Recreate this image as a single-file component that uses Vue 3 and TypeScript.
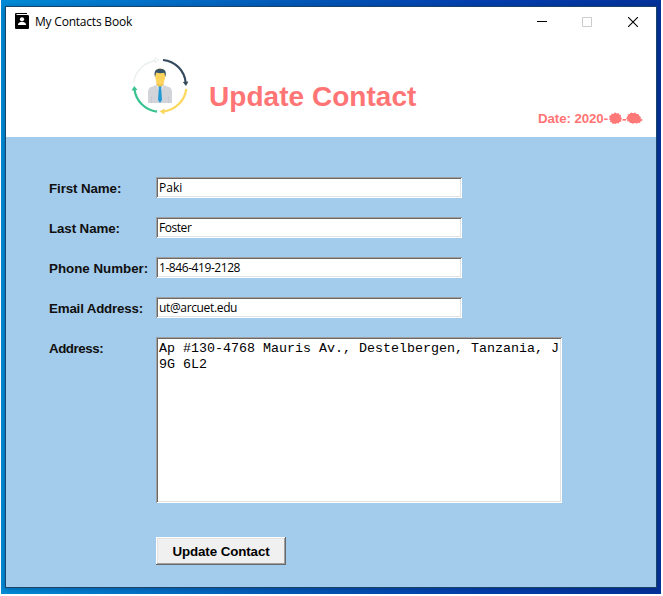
<script setup lang="ts">
import { ref } from 'vue'

interface Field {
  id: string
  label: string
  value: string
}

const fields = ref<Field[]>([
  { id: 'first', label: 'First Name:', value: 'Paki' },
  { id: 'last', label: 'Last Name:', value: 'Foster' },
  { id: 'phone', label: 'Phone Number:', value: '1-846-419-2128' },
  { id: 'email', label: 'Email Address:', value: 'ut@arcuet.edu' },
])
const address = ref('Ap #130-4768 Mauris Av., Destelbergen, Tanzania, J9G 6L2')
</script>

<template>
  <div class="desktop">
    <div class="window">
      <header class="titlebar">
        <svg class="app-icon" width="14" height="16" viewBox="0 0 14 16">
          <path d="M1 0H12v1H2v1h10.500Q14 2 14 3V15Q14 16 13 16H1Q0 16 0 15V1Q0 0 1 0Z" fill="#000" />
          <path d="M1.500 1.500H12" stroke="#fff" stroke-width="1" />
          <circle cx="7" cy="6.300" r="2.100" fill="#fff" />
          <path d="M3 12v-.8C3 9.600 5.500 9 7 9s4 .6 4 2.200v.8Z" fill="#fff" />
        </svg>
        <span class="app-name">My Contacts Book</span>
        <div class="controls">
          <svg width="10" height="10" viewBox="0 0 10 10"><path d="M0 4.500H10" stroke="#000" /></svg>
          <svg class="maximize" width="10" height="10" viewBox="0 0 10 10"><path d="M.5.5h9v9h-9Z" fill="none" stroke="#ccc" /></svg>
          <svg width="10" height="10" viewBox="0 0 10 10"><path d="M0 0 10 10M10 0 0 10" stroke="#000" stroke-width="1.100" /></svg>
        </div>
      </header>

      <section class="banner">
        <svg class="logo" width="80" height="70" viewBox="0 0 80 70">
          <g fill="none" stroke-width="2.200">
            <path d="M43 10A25 25 0 0 1 65.700 33" stroke="#34495e" />
            <path d="M66.300 39A26 26 0 0 1 43 61.500" stroke="#fbd75e" />
            <path d="M37 61.700A26 26 0 0 1 14.400 39" stroke="#3bc492" />
            <path d="M13.700 32A26 26 0 0 1 36 10.500" stroke="#e9eeee" stroke-width="1.300" />
          </g>
          <path d="m62.800 32 3.200 4 2.400-4.500Z" fill="#34495e" />
          <path d="m44.500 58.500-5 3 5 3Z" fill="#fbd75e" />
          <path d="m11.500 40.500 2.700-4.500 3.300 4Z" fill="#3bc492" />
          <path d="m35 8 4 2.200-3.600 2.500Z" fill="#fff" stroke="#e2e8e8" stroke-width=".7" />
          <path d="M28 53V41.500c0-3 2-4.500 5-5l4-2h6l4 2c3 .6 5 2 5 5V53Z" fill="#d3d4da" />
          <path d="m36.500 35 3.500 3 3.500-3v-4h-7Z" fill="#f1bf42" />
          <path d="m36 34.500 4 3 4-3-2 5h-4Z" fill="#e7e8ec" />
          <path d="m37 31 3 5.500 3-5.500Z" fill="#f3c449" />
          <path d="M38.500 36.500h3l-.3 2L42 50 40 53l-2-3 .8-11.500Z" fill="#2199d5" />
          <path d="M35 24c0-4 2-5.500 5.200-5.500s5.200 1.500 5.200 5.500c0 6.500-2.400 11-5.200 11S35 30.500 35 24Z" fill="#ffd45c" />
          <path d="M35 27c-1.500-6 1-8.200 5.400-8.200S47 21.500 45.300 27l-1.100-4.200c-3 .6-5.500.4-8-.2Z" fill="#34536b" />
          <path d="M31.500 46v7M48.500 46v7" stroke="#c4c6cd" stroke-width=".7" />
        </svg>
        <h1>Update Contact</h1>
        <div class="date">
          <span>Date: 2020-</span>
          <svg width="37" height="14" viewBox="0 0 37 14">
            <path d="m1 5 1.500-.5L4 2.500l1.500.5L7 1.200l1.500 1.300 2-.5.5 1.500 2 .5-.3 2 1.300 1.500-1 1.500.5 1.500-2 .5-1 1.500-1.500-.5-1.500 1-1.500-.5-1.500.5-.5-1.500-2-.5.5-1.500L1 8.500 1.800 7Z" fill="#ff7878" />
            <path d="M14.500 8.800h3.500" stroke="#ff7070" stroke-width="1.600" />
            <path d="m18.500 6 1.500-1-.5-1.500 2-.5 1.500-1.500 2 .8 2-.8 1.500 1.500 2 0 .8 2 1.700 1-.5 1.500 2.500 1.500-2.500 1.500-.5 1.500-2-.3-1.500 1-1.500-1-2 1-1.500-.8-1.500 0-1-1.600-2 0 .5-1.500-1.500-1 1-1Z" fill="#ff7878" />
          </svg>
        </div>
      </section>

      <main class="form">
        <div v-for="f in fields" :key="f.id" class="row" :class="f.id">
          <label :for="f.id">{{ f.label }}</label>
          <input :id="f.id" v-model="f.value" type="text" spellcheck="false" />
        </div>
        <div class="row address-row">
          <label for="address">Address:</label>
          <textarea id="address" v-model="address" spellcheck="false"></textarea>
        </div>
        <button type="button">Update Contact</button>
      </main>
    </div>
  </div>
</template>

<style>
body {
  margin: 0;
  background: #fff;
  overflow: hidden;
}
</style>

<style scoped>
* {
  box-sizing: border-box;
}
.desktop {
  width: 660px;
  height: 594px;
  margin-left: 1px;
  padding: 6px 4px;
  background: linear-gradient(90deg, #008bd6 0%, #0471c9 22%, #0355b5 48%, #043fae 72%, #04329a 100%);
  font-family: "Liberation Sans", Arial, sans-serif;
}
.window {
  width: 652px;
  height: 582px;
  border: 1px solid #174468;
  background: #a3cbeb;
  box-shadow: 0 1px 5px rgba(0, 20, 60, 0.35);
}
.titlebar {
  display: flex;
  align-items: center;
  height: 29px;
  padding-left: 9px;
  background: #fff;
}
.app-icon {
  display: block;
  margin-top: -1px;
}
.app-name {
  margin-left: 6px;
  font: 12px/16px "Open Sans", "Noto Sans", sans-serif;
  letter-spacing: -0.21px;
  color: #000;
}
.controls {
  display: flex;
  gap: 35px;
  margin-left: auto;
  padding-right: 18px;
}
.controls svg {
  display: block;
}
.controls .maximize {
  margin-right: 1px;
}
.banner {
  display: flex;
  height: 101px;
  padding-left: 114px;
  background: #fff;
}
.logo {
  display: block;
  margin-top: 14px;
}
h1 {
  margin: 45px 0 0 9px;
  font-size: 28px;
  line-height: 32px;
  font-weight: bold;
  letter-spacing: 0.04px;
  color: #ff7575;
  white-space: nowrap;
}
.date {
  display: flex;
  height: 16px;
  margin: 75px 11px 0 auto;
  font-size: 13.333px;
  line-height: 16px;
  font-weight: bold;
  letter-spacing: -0.1px;
  color: #ff7575;
  white-space: nowrap;
}
.form {
  padding: 40px 0 0 43px;
}
.row {
  display: flex;
  height: 40px;
}
label {
  width: 107px;
  padding-top: 4px;
  font-size: 13.333px;
  line-height: 16px;
  font-weight: bold;
  color: #101010;
  white-space: nowrap;
}
.first label,
.last label {
  letter-spacing: -0.1px;
}
.email label {
  letter-spacing: -0.18px;
}
.address-row label {
  letter-spacing: -0.45px;
}
input,
textarea {
  display: block;
  margin: 0;
  border: 0;
  border-radius: 0;
  outline: 0;
  background: #fff;
  color: #000;
  box-shadow: inset 1px 1px #a0a0a0, inset -1px -1px #fff, inset 2px 2px #696969, inset -2px -2px #e3e3e3;
}
input {
  width: 306px;
  height: 21px;
  padding: 2px 3px;
  font: 12px/17px "Open Sans", "Noto Sans", sans-serif;
}
.last input {
  letter-spacing: -0.45px;
}
.phone input {
  letter-spacing: -0.43px;
}
.email input {
  letter-spacing: -0.35px;
}
.address-row {
  height: 200px;
}
textarea {
  width: 406px;
  height: 166px;
  padding: 4px 2px 2px 3px;
  resize: none;
  overflow: hidden;
  word-break: break-all;
  font: 13.333px/16px "Liberation Mono", "Courier New", monospace;
}
button {
  display: block;
  width: 130px;
  height: 28px;
  margin: 0 0 0 107px;
  padding: 2px 0 0;
  border: 0;
  border-radius: 0;
  background: #f0f0f0;
  box-shadow: inset -1px -1px #696969, inset 1px 1px #fff, inset -2px -2px #a0a0a0, inset 2px 2px #e3e3e3;
  font: bold 13.333px/16px "Liberation Sans", Arial, sans-serif;
  letter-spacing: -0.1px;
  color: #000;
}
</style>
